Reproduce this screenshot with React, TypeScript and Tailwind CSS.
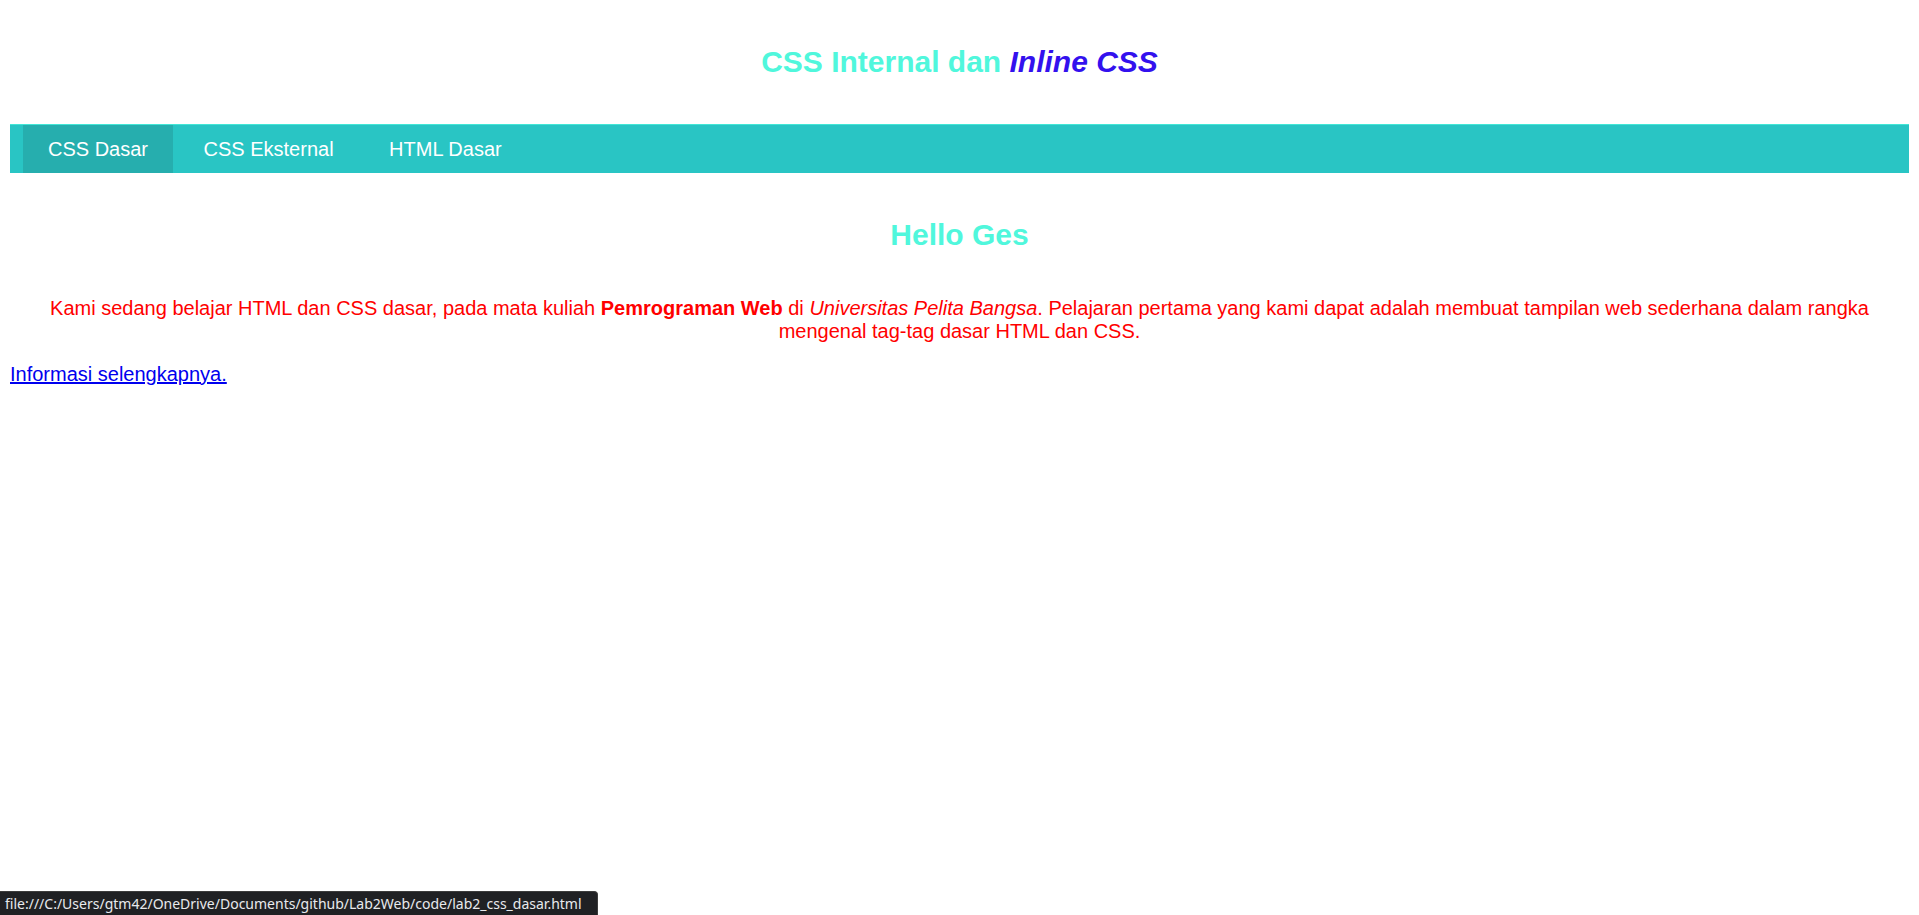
export default function App() {
  const links = ['CSS Dasar', 'CSS Eksternal', 'HTML Dasar'];

  return (
    <div className="min-h-[915px] bg-white px-[10px] font-['Liberation_Sans',Arial,sans-serif]">
      <header className="pt-[45px] pb-[44px]">
        <h2 className="text-center text-[30px] font-bold leading-[34.5px] text-[#50f7dc]">
          CSS Internal dan <i className="text-[#3311ee]">Inline CSS</i>
        </h2>
      </header>

      <nav className="flex h-[49px] gap-[5.5px] border-t border-[#42e6d6] bg-[#29c5c4] pl-[13px]">
        {links.map((label, i) => (
          <a
            key={label}
            href="#"
            className={
              i === 0
                ? 'flex items-center bg-[#26aeae] px-[25px] text-[20px] text-white'
                : 'flex items-center px-[25px] text-[20px] text-white'
            }
          >
            {label}
          </a>
        ))}
      </nav>

      <main className="pt-[45px]">
        <h2 className="text-center text-[30px] font-bold leading-[34.5px] text-[#50f7dc]">Hello Ges</h2>
        <p className="mt-[45px] text-center text-[20px] leading-[23px] text-[#ff0000]">
          Kami sedang belajar HTML dan CSS dasar, pada mata kuliah <b>Pemrograman Web</b> di{' '}
          <i>Universitas Pelita Bangsa</i>. Pelajaran pertama yang kami dapat adalah membuat tampilan web sederhana
          dalam rangka mengenal tag-tag dasar HTML dan CSS.
        </p>
        <p className="mt-[20px] text-[20px] leading-[23px]">
          <a href="#" className="text-[#0000ee] underline">
            Informasi selengkapnya.
          </a>
        </p>
      </main>

      {/* status bubble */}
      <div className="fixed bottom-0 left-0 flex h-[24px] items-center rounded-tr-[4px] border-t border-r border-[#3c3c3c] bg-[#202124] pr-[15px] pl-[5px] font-['Noto_Sans',sans-serif] text-[14px] text-[#e8eaed]">
        file:///C:/Users/gtm42/OneDrive/Documents/github/Lab2Web/code/lab2_css_dasar.html
      </div>
    </div>
  );
}
